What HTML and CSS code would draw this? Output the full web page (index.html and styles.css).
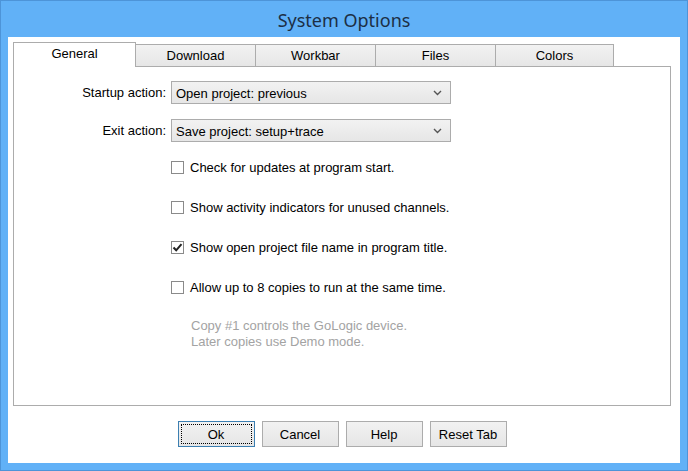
FILE: index.html
```html
<!DOCTYPE html>
<html lang="en">

<head>
    <meta charset="UTF-8">
    <title>System Options</title>
    <link rel="stylesheet" href="styles.css">
</head>

<body>
    <div class="window">
        <div class="titlebar">System Options</div>

        <div class="client">
            <div class="tabs">
                <div class="tab active">General</div>
                <div class="tab">Download</div>
                <div class="tab">Workbar</div>
                <div class="tab">Files</div>
                <div class="tab">Colors</div>
            </div>

            <div class="panel">
                <div class="field">
                    <label>Startup action:</label>
                    <div class="select">Open project: previous
                        <svg class="chevron" width="9" height="6" viewBox="0 0 9 6"><path d="M1 1 L4.5 4.5 L8 1" fill="none" stroke="#555" stroke-width="1.4"/></svg>
                    </div>
                </div>
                <div class="field">
                    <label>Exit action:</label>
                    <div class="select">Save project: setup+trace
                        <svg class="chevron" width="9" height="6" viewBox="0 0 9 6"><path d="M1 1 L4.5 4.5 L8 1" fill="none" stroke="#555" stroke-width="1.4"/></svg>
                    </div>
                </div>

                <div class="checks">
                    <div class="check"><span class="box"></span>Check for updates at program start.</div>
                    <div class="check"><span class="box"></span>Show activity indicators for unused channels.</div>
                    <div class="check"><span class="box">
                        <svg width="11" height="11" viewBox="0 0 11 11"><path d="M1.5 5.5 L4.2 8.3 L9.5 2.2" fill="none" stroke="#222" stroke-width="2"/></svg>
                    </span>Show open project file name in program title.</div>
                    <div class="check"><span class="box"></span>Allow up to 8 copies to run at the same time.</div>
                </div>

                <div class="note">
                    Copy #1 controls the GoLogic device.<br>
                    Later copies use Demo mode.
                </div>
            </div>

            <div class="buttons">
                <button class="default"><span>Ok</span></button>
                <button>Cancel</button>
                <button>Help</button>
                <button>Reset Tab</button>
            </div>
        </div>
    </div>
</body>

</html>
```

FILE: styles.css
```css
* {
    box-sizing: border-box;
    margin: 0;
    padding: 0;
}

body {
    font-family: "Liberation Sans", Arial, sans-serif;
    font-size: 13px;
    color: #000;
    background-color: #5fb0f6;
}

.window {
    width: 688px;
    height: 471px;
    background-color: #61b1f7;
    border: 1px solid #4d94d8;
    display: flex;
    flex-direction: column;
}

.titlebar {
    height: 36px;
    display: flex;
    align-items: center;
    justify-content: center;
    font-family: "Noto Sans", "Open Sans", sans-serif;
    font-size: 18px;
    color: #1c2f45;
    padding-top: 1px;
}

.client {
    background-color: #fff;
    margin: 0 7px;
    height: 426px;
    padding: 5px 9px 0 5px;
}

.tabs {
    display: flex;
    align-items: flex-end;
    height: 24px;
}

.tab {
    width: 120px;
    height: 22px;
    border: 1px solid #acacac;
    border-bottom: none;
    border-left: none;
    background: linear-gradient(#f2f2f2, #e6e6e6);
    text-align: center;
    line-height: 21px;
}

.tab:last-child {
    width: 118px;
}

.tab.active {
    width: 123px;
    height: 25px;
    background: #fff;
    border-left: 1px solid #acacac;
    border-right: 1px solid #acacac;
    line-height: 22px;
    position: relative;
    z-index: 1;
    margin-bottom: -1px;
}

.panel {
    height: 340px;
    border: 1px solid #acacac;
    padding-top: 14px;
}

.field {
    display: flex;
    align-items: center;
    margin-bottom: 15px;
}

.field label {
    width: 152px;
    text-align: right;
    margin-right: 5px;
}

.select {
    width: 280px;
    height: 23px;
    border: 1px solid #acacac;
    background: linear-gradient(#f2f2f2, #e6e6e6);
    display: flex;
    align-items: center;
    justify-content: space-between;
    padding: 1px 8px 0 4px;
}

.checks {
    margin-left: 157px;
    margin-top: 17px;
    display: flex;
    flex-direction: column;
    gap: 24px;
}

.check {
    display: flex;
    align-items: center;
    height: 16px;
}

.box {
    width: 13px;
    height: 13px;
    border: 1px solid #8a8a8a;
    background: #fff;
    margin-right: 6px;
    display: flex;
    align-items: center;
    justify-content: center;
}

.note {
    margin: 23px 0 0 177px;
    color: #a3a3a3;
    line-height: 16px;
}

.buttons {
    display: flex;
    justify-content: center;
    gap: 7px;
    margin-top: 15px;
}

button {
    width: 77px;
    height: 26px;
    border: 1px solid #acacac;
    background: linear-gradient(#f2f2f2, #e6e6e6);
    font-family: inherit;
    font-size: 13px;
    color: #000;
}

button.default {
    border-color: #3c7fb1;
    padding: 2px;
}

button.default span {
    display: flex;
    align-items: center;
    justify-content: center;
    height: 100%;
    border: 1px dotted #000;
}
```
